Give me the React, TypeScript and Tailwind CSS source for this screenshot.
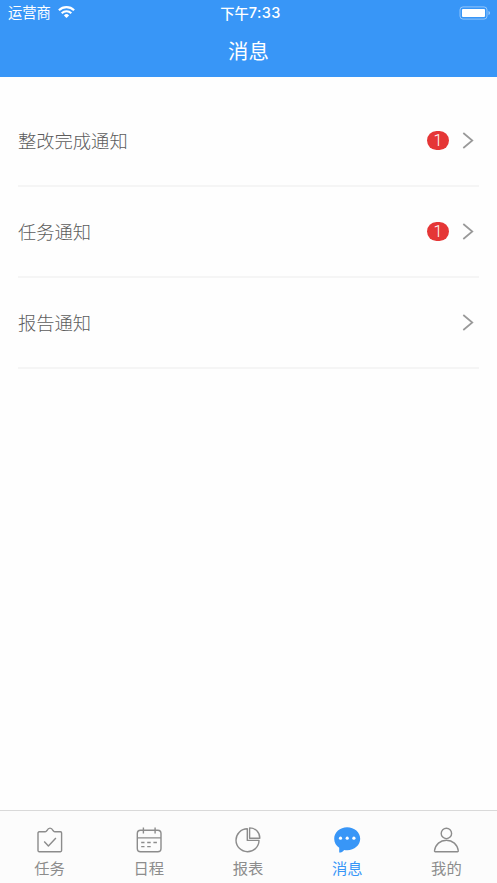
import { useState } from "react"
import type { ReactNode } from "react"
import clsx from "clsx"

interface NoticeItem {
  id: string
  title: string
  count: number
}

interface TabItem {
  id: string
  label: string
  icon: ReactNode
}

const notices: NoticeItem[] = [
  { id: "rectify", title: "整改完成通知", count: 1 },
  { id: "task", title: "任务通知", count: 1 },
  { id: "report", title: "报告通知", count: 0 },
]

const TaskIcon = () => (
  <svg className="h-7 w-7" viewBox="0 0 28 28" fill="none" stroke="currentColor" strokeWidth="1.4" strokeLinejoin="round">
    <path d="M9 5.8H3.1A1.1 1.1 0 0 0 2 6.9v17.7a1.1 1.1 0 0 0 1.1 1.1h21.4a1.1 1.1 0 0 0 1.1-1.1V6.9a1.1 1.1 0 0 0-1.1-1.1H19c-.9 0-1.2-.5-1.9-1.2C16.3 3.1 15.4 2.1 14 2.1s-2.300 1-3.1 2.5C10.2 5.3 9.9 5.8 9 5.8Z" />
    <path d="M8.2 15.500l4.2 4.400 7.500-8" />
  </svg>
)

const CalendarIcon = () => (
  <svg className="h-7 w-7" viewBox="0 0 28 28" fill="none" stroke="currentColor" strokeWidth="1.4">
    <rect x="2.3" y="4.3" width="23.7" height="21.5" rx="3.2" />
    <path d="M2.3 11.9H26M8.4 1.6v6M20.1 1.6v6" />
    <path d="M6.2 16.5h3.3M12.2 16.5h3.5M18.4 16.5h3.5M6.2 20.6h3.3M12.2 20.6h3.5" />
  </svg>
)

const ReportIcon = () => (
  <svg className="h-7 w-7" viewBox="0 0 28 28" fill="none" stroke="currentColor" strokeWidth="1.4" strokeLinejoin="round">
    <path d="M13.3 2.7A11.5 11.5 0 1 0 25 14.4H13.3Z" />
    <path d="M15.6 1.9v10.3h10.2C25.8 6.2 21.4 1.9 15.6 1.9Z" />
  </svg>
)

const MessageIcon = () => (
  <svg className="h-7 w-7" viewBox="0 0 28 28">
    <path
      fill="currentColor"
      d="M14.1 1.3C7 1.3 1.2 6.3 1.2 12.7c0 3.8 1.9 7 5 9.1v4.8c2-.1 3.9-1.1 5-2.7 1 .2 2 .3 3 .3 7.2 0 13-5.2 13-11.500S21.4 1.3 14.1 1.3Z"
    />
    <g fill="#fff">
      <circle cx="7.5" cy="12.2" r="1.6" />
      <circle cx="14.2" cy="12.2" r="1.6" />
      <circle cx="20.9" cy="12.2" r="1.6" />
    </g>
  </svg>
)

const UserIcon = () => (
  <svg className="h-7 w-7" viewBox="0 0 28 28" fill="none" stroke="currentColor" strokeWidth="1.4" strokeLinejoin="round">
    <circle cx="14.4" cy="7.4" r="5.2" />
    <path d="M3.300 25.700h22.200c.6 0 .9-.4.8-1C25.400 18.300 20.600 14.300 14.400 14.300S3.400 18.300 2.500 24.700c-.1.600.2 1 .8 1Z" />
  </svg>
)

const tabs: TabItem[] = [
  { id: "task", label: "任务", icon: <TaskIcon /> },
  { id: "schedule", label: "日程", icon: <CalendarIcon /> },
  { id: "report", label: "报表", icon: <ReportIcon /> },
  { id: "message", label: "消息", icon: <MessageIcon /> },
  { id: "mine", label: "我的", icon: <UserIcon /> },
]

const StatusBar = () => (
  <div className="grid h-[25px] grid-cols-3 items-center pr-1.5 pl-2">
    <div className="flex items-center gap-[7px]">
      <span className="text-[14.3px] leading-none">运营商</span>
      <svg className="h-3 w-[17px]" viewBox="0 0 17 12">
        <g fill="none" stroke="#fff" strokeWidth="2.2">
          <path d="M.9 4.300a10.900 10.900 0 0 1 15.200 0" />
          <path d="M3.700 7.200a6.900 6.900 0 0 1 9.600 0" />
        </g>
        <path d="M8.500 12 5.900 9.400a3.700 3.700 0 0 1 5.200 0Z" fill="#fff" />
      </svg>
    </div>
    <div className="flex items-center justify-center pt-px pl-0.5 leading-none font-medium">
      <span className="text-[14.3px]">下午</span>
      <span className="font-[Inter,sans-serif] text-[14.5px] tracking-[0.4px]">7:33</span>
    </div>
    <svg className="h-[14px] w-8 justify-self-end" viewBox="0 0 32 14">
      <rect x="1" y=".9" width="27" height="12.2" rx="3" fill="none" stroke="#fff" strokeOpacity=".45" />
      <rect x="3" y="2.9" width="23" height="8.2" rx="1" fill="#fff" />
      <path d="M29.500 5v4c.9-.4 1.500-1.100 1.500-2s-.6-1.600-1.500-2Z" fill="#fff" fillOpacity=".5" />
    </svg>
  </div>
)

const NoticeRow = ({ item }: { item: NoticeItem }) => (
  <li className="flex h-[91px] items-center border-b-2 border-[#f5f5f5] pr-[5px]">
    <span className="flex-1 text-[18.3px] font-light text-[#5c5c5c]">{item.title}</span>
    {item.count > 0 && (
      <span className="mr-[13px] flex h-[19px] w-[22px] items-center justify-center rounded-[10px] bg-[#e53636] font-[Roboto,sans-serif] text-[16px] leading-none font-light text-white">
        {item.count}
      </span>
    )}
    <svg className="h-[17px] w-3" viewBox="0 0 12 17" fill="none" stroke="#999" strokeWidth="1.7">
      <path d="M1.300 1l9 7.500-9 7.500" />
    </svg>
  </li>
)

export default function App() {
  const [activeTab, setActiveTab] = useState("message")

  return (
    <div className="flex h-screen w-full flex-col bg-[#fefefe] font-['Noto_Sans_CJK_SC',sans-serif]">
      <header className="h-[77px] bg-[#3896f7] text-white">
        <StatusBar />
        <h1 className="flex h-[50px] items-center justify-center text-[20.4px]">消息</h1>
      </header>

      <main className="flex-1 px-[18px] pt-[19px]">
        <ul>
          {notices.map((item) => (
            <NoticeRow key={item.id} item={item} />
          ))}
        </ul>
      </main>

      <nav className="grid h-[73px] grid-cols-5 border-t border-[#d9d9d9] bg-[#fcfcfc] pr-px">
        {tabs.map((tab) => (
          <button
            key={tab.id}
            onClick={() => setActiveTab(tab.id)}
            className={clsx(
              "flex flex-col items-center pt-[15px]",
              activeTab === tab.id ? "text-[#3896f7]" : "text-[#8c8c8c]",
            )}
          >
            {tab.icon}
            <span className="mt-px text-[15.3px] leading-6">{tab.label}</span>
          </button>
        ))}
      </nav>
    </div>
  )
}
